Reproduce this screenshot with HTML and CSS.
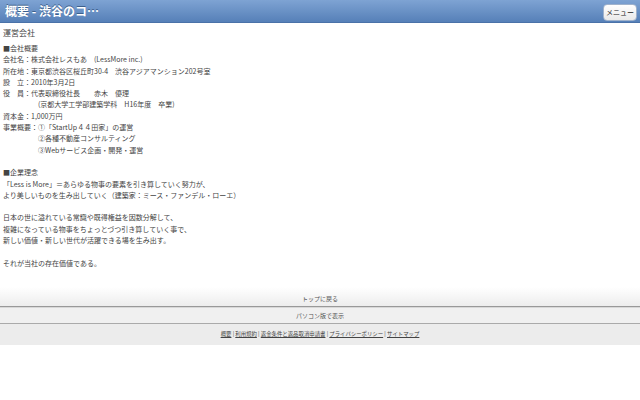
FILE: index.html
```html
<!DOCTYPE html>
<html lang="ja">
<head>
<meta charset="utf-8">
<title>概要 - 渋谷のコンサルティング</title>
<link rel="stylesheet" href="styles.css">
</head>
<body>
<header class="topbar">
  <h1 class="title">概要 - 渋谷のコ…</h1>
  <button class="menu-btn">メニュー</button>
</header>
<main class="content">
  <h2 class="section-title">運営会社</h2>
  <div class="text">
    <p>■会社概要</p>
    <p>会社名：株式会社レスもあ　(LessMore inc.)</p>
    <p>所在地：東京都渋谷区桜丘町30-4　渋谷アジアマンション202号室</p>
    <p>設　立：2010年3月2日</p>
    <p>役　員：代表取締役社長　　赤木　優理</p>
    <p>　　　　　(京都大学工学部建築学科　H16年度　卒業)</p>
    <p>資本金：1,000万円</p>
    <p>事業概要：①「StartUp４４田家」の運営</p>
    <p>　　　　　②各種不動産コンサルティング</p>
    <p>　　　　　③Webサービス企画・開発・運営</p>
    <p class="blank">&nbsp;</p>
    <p>■企業理念</p>
    <p>「Less is More」＝あらゆる物事の要素を引き算していく努力が、</p>
    <p>より美しいものを生み出していく（建築家：ミース・ファンデル・ローエ）</p>
    <p class="blank">&nbsp;</p>
    <p>日本の世に溢れている常識や既得権益を因数分解して、</p>
    <p>複雑になっている物事をちょっとづつ引き算していく事で、</p>
    <p>新しい価値・新しい世代が活躍できる場を生み出す。</p>
    <p class="blank">&nbsp;</p>
    <p>それが当社の存在価値である。</p>
  </div>
</main>
<footer class="footer">
  <div class="to-top">トップに戻る</div>
  <div class="pc-view">パソコン版で表示</div>
  <nav class="links">
    <a href="#">概要</a> | <a href="#">利用規約</a> | <a href="#">返金条件と返品取消申請書</a> | <a href="#">プライバシーポリシー</a> | <a href="#">サイトマップ</a>
  </nav>
</footer>
</body>
</html>
```
FILE: styles.css
```css
html, body {
  margin: 0;
  padding: 0;
  background: #fff;
}
body {
  font-family: "Noto Sans CJK JP", "Noto Sans", sans-serif;
  color: #444;
  width: 640px;
}
.topbar {
  height: 23px;
  box-sizing: border-box;
  background: linear-gradient(#7ea3d3, #5680b8);
  border-bottom: 1px solid #4a72a8;
  display: flex;
  align-items: center;
  justify-content: space-between;
  padding: 0 3px 0 5px;
}
.title {
  margin: 0;
  font-size: 12px;
  font-weight: bold;
  color: #fff;
  text-shadow: 0 -1px 0 #3d5f8c;
  line-height: 1;
}
.menu-btn {
  font-family: inherit;
  width: 34px;
  height: 17px;
  padding: 0;
  font-size: 7px;
  color: #222;
  background: linear-gradient(#ffffff, #e9e9e9);
  border: 1px solid #9fb2cc;
  border-radius: 4px;
  line-height: 15px;
  margin-top: 3px;
}
.content {
  padding: 0 3px;
}
.section-title {
  margin: 0;
  padding-top: 4px;
  font-size: 8px;
  font-weight: normal;
  line-height: 12px;
  color: #444;
}
.text {
  margin-top: 4px;
  font-size: 7px;
  line-height: 11.3px;
}
.text p {
  margin: 0;
  white-space: pre;
}
.footer {
  margin-top: 18px;
  font-size: 6px;
  color: #555;
  text-align: center;
}
.to-top {
  height: 19px;
  line-height: 23px;
  background: linear-gradient(#ffffff, #ededed);
  border-bottom: 1px solid #999;
  box-shadow: 0 1px 0 #d8d8d8;
}
.pc-view {
  margin-top: 1px;
  height: 15px;
  line-height: 15px;
  background: #f0f0f0;
  border-bottom: 1px solid #aaa;
}
.links {
  height: 21px;
  line-height: 21px;
  background: #ececec;
  color: #444;
  font-size: 5.4px;
}
.links a {
  color: #444;
  text-decoration: underline;
}
```
